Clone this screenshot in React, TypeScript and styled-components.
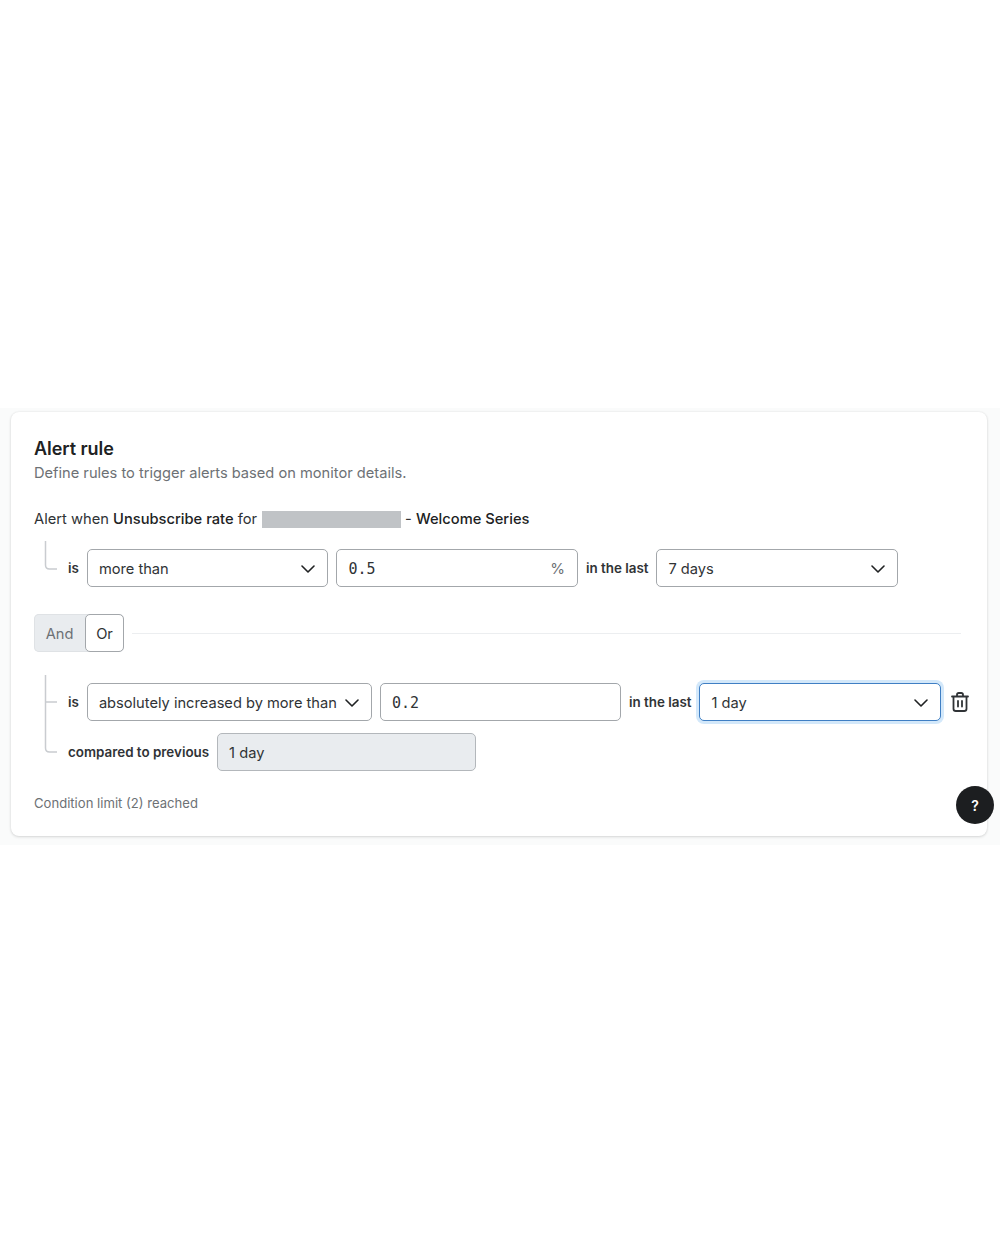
import React from "react";
import styled, { createGlobalStyle } from "styled-components";

const Global = createGlobalStyle`
  html, body { margin: 0; padding: 0; background: #fff; }
  body { font-family: Inter, "Liberation Sans", sans-serif; color: #202223; -webkit-font-smoothing: antialiased; }
`;

const Page = styled.div`
  position: relative;
  height: 1250px;
  padding-top: 408px;
  box-sizing: border-box;
`;
const Band = styled.div`
  background: #fafbfb;
  padding: 4px 13px 9px 11px;
`;
const Card = styled.section`
  background: #fff;
  border-radius: 8px;
  box-shadow: 0 0 2px rgba(23, 24, 24, 0.08), 0 1px 3px rgba(23, 24, 24, 0.14);
  padding: 25px 23px 23px;
`;
const Title = styled.h2`
  margin: 0;
  font-size: 18px;
  line-height: 24px;
  font-weight: 600;
  letter-spacing: -0.05px;
  color: #202223;
`;
const Sub = styled.p`
  margin: 2px 0 0;
  font-size: 14.65px;
  line-height: 20px;
  color: #6d7175;
`;
const AlertLine = styled.div`
  margin-top: 26px;
  font-size: 14.7px;
  line-height: 20px;
  display: flex;
  align-items: center;
  white-space: pre;
  color: #303336;
`;
const Strong = styled.span`
  font-weight: 500;
  color: #202223;
`;
const Redacted = styled.span`
  width: 139px;
  height: 17px;
  margin: 1px 4px 0 5px;
  background: #c0c3c6;
`;
const Block = styled.div<{ $mt: number }>`
  display: flex;
  margin-top: ${(p) => p.$mt}px;
  padding-top: 8px;
`;
const Rail = styled.svg`
  flex: none;
  width: 34px;
  margin-top: -8px;
  color: #c9ccd0;
`;
const Rows = styled.div`
  display: flex;
  flex-direction: column;
  gap: 12px;
`;
const Row = styled.div`
  display: flex;
  align-items: center;
  gap: 8px;
  height: 38px;
`;
const Label = styled.span`
  font-size: 13.4px;
  font-weight: 600;
  white-space: nowrap;
  color: #303336;
`;
const Field = styled.div<{ $w: number }>`
  box-sizing: border-box;
  width: ${(p) => p.$w}px;
  height: 38px;
  padding: 1px 12px 0 11px;
  display: flex;
  align-items: center;
  justify-content: space-between;
  background: #fff;
  border: 1px solid #a3a7ab;
  border-radius: 5px;
  font-size: 14.65px;
  white-space: nowrap;
  color: #303336;
`;
const FocusField = styled(Field)`
  border-color: #3f7fc4;
  box-shadow: 0 0 0 3px #d3e8fa;
`;
const DisabledField = styled(Field)`
  background: #e9ecef;
  border-color: #b3b7bb;
`;
const Mono = styled.span`
  font-family: "DejaVu Sans Mono", "Liberation Mono", monospace;
  font-size: 15px;
  color: #303336;
`;
const Suffix = styled.span`
  font-size: 15px;
  color: #6d7175;
`;
const ToggleRow = styled.div`
  display: flex;
  align-items: center;
  gap: 8px;
  margin-top: 27px;
  padding-right: 3px;
`;
const Toggle = styled.div`
  display: flex;
  width: 90px;
  height: 38px;
  flex: none;
  border-radius: 5px;
  background: #e9ecef;
  box-shadow: inset 0 0 0 1px #dfe2e5;
  font-size: 14.65px;
`;
const ToggleOff = styled.span`
  width: 51px;
  padding-top: 1px;
  display: flex;
  align-items: center;
  justify-content: center;
  color: #6d7175;
`;
const ToggleOn = styled.span`
  box-sizing: border-box;
  width: 39px;
  padding-top: 1px;
  display: flex;
  align-items: center;
  justify-content: center;
  background: #fff;
  border: 1px solid #a3a7ab;
  border-radius: 5px;
  color: #303336;
`;
const Divider = styled.div`
  flex: 1;
  height: 1px;
  background: #eceef0;
`;
const Footer = styled.p`
  margin: 22px 0 0;
  font-size: 13.1px;
  line-height: 20px;
  color: #6d7175;
`;
const Help = styled.button`
  position: absolute;
  left: 956px;
  top: 786px;
  width: 38px;
  height: 38px;
  padding: 0;
  border: 0;
  border-radius: 50%;
  background: #1c1e20;
  color: #fff;
  font-family: inherit;
  font-size: 14px;
  font-weight: 600;
`;
const IconButton = styled.span`
  display: flex;
  margin-left: 2px;
  color: #303336;
`;

const Chevron = () => (
  <svg width="14" height="8" viewBox="0 0 14 8" fill="none" stroke="#202223" strokeWidth="1.6" strokeLinecap="round" strokeLinejoin="round">
    <path d="M1 1l6 6 6-6" />
  </svg>
);
const Trash = () => (
  <svg width="18" height="20" viewBox="0 0 18 20" fill="none" stroke="currentColor" strokeWidth="1.8" strokeLinecap="round" strokeLinejoin="round">
    <path d="M1 4.5h16M6 4.5V2.8C6 1.8 6.8 1 7.8 1h2.4c1 0 1.8.8 1.8 1.8v1.7M2.5 4.5v12.2c0 1.3 1 2.3 2.3 2.3h8.4c1.3 0 2.3-1 2.3-2.3V4.5M7 9v5.5M11 9v5.5" />
  </svg>
);

export default function App() {
  return (
    <Page>
      <Global />
      <Band>
        <Card>
          <Title>Alert rule</Title>
          <Sub>Define rules to trigger alerts based on monitor details.</Sub>
          <AlertLine>
            Alert when <Strong>Unsubscribe rate</Strong> for
            <Redacted />- <Strong>Welcome Series</Strong>
          </AlertLine>
          <Block $mt={12}>
            <Rail height="46" viewBox="0 0 34 46" fill="none" stroke="currentColor" strokeWidth="1.5">
              <path d="M11.5 0v24q0 4 4 4H23" />
            </Rail>
            <Rows>
              <Row>
                <Label>is</Label>
                <Field $w={241.5}>more than<Chevron /></Field>
                <Field $w={241.5}><Mono>0.5</Mono><Suffix>%</Suffix></Field>
                <Label>in the last</Label>
                <Field $w={241.8}>7 days<Chevron /></Field>
              </Row>
            </Rows>
          </Block>
          <ToggleRow>
            <Toggle>
              <ToggleOff>And</ToggleOff>
              <ToggleOn>Or</ToggleOn>
            </Toggle>
            <Divider />
          </ToggleRow>
          <Block $mt={23}>
            <Rail height="96" viewBox="0 0 34 96" fill="none" stroke="currentColor" strokeWidth="1.5">
              <path d="M11.5 0v73q0 4 4 4H23M11.5 27H23" />
            </Rail>
            <Rows>
              <Row>
                <Label>is</Label>
                <Field $w={285}>absolutely increased by more than<Chevron /></Field>
                <Field $w={241}><Mono>0.2</Mono></Field>
                <Label>in the last</Label>
                <FocusField $w={241.5}>1 day<Chevron /></FocusField>
                <IconButton><Trash /></IconButton>
              </Row>
              <Row>
                <Label>compared to previous</Label>
                <DisabledField $w={259}>1 day</DisabledField>
              </Row>
            </Rows>
          </Block>
          <Footer>Condition limit (2) reached</Footer>
        </Card>
      </Band>
      <Help>?</Help>
    </Page>
  );
}
